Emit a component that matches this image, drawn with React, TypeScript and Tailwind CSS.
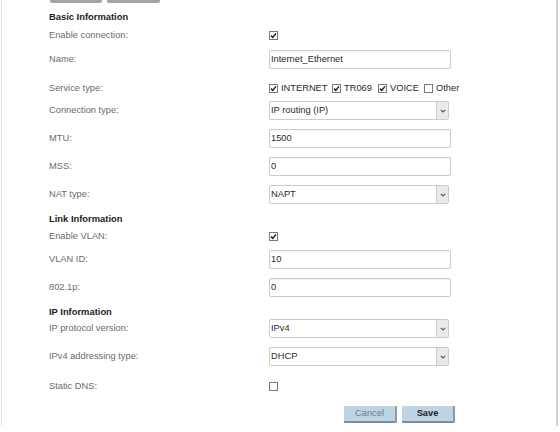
import type { ReactNode } from "react";

const font = { fontFamily: '"Liberation Sans", Arial, sans-serif' };

function Check({ on }: { on: boolean }) {
    return (
        <span className="inline-flex h-[9px] w-[9px] shrink-0 items-center justify-center border border-[#7a7a7a] bg-white">
            {on && (
                <svg width="7" height="7" viewBox="0 0 7 7">
                    <path d="M1 3.6 L2.8 5.4 L6 1.4" fill="none" stroke="#222" strokeWidth="1.5" />
                </svg>
            )}
        </span>
    );
}

function TextBox({ value }: { value: string }) {
    return (
        <div className="flex h-[19px] w-[182px] items-center rounded-[2px] border border-[#cbcbcb] bg-white pl-[1px] text-[9.3px] text-[#2a2a2a] shadow-[inset_0_1px_1px_rgba(0,0,0,0.05)]">
            {value}
        </div>
    );
}

function Dropdown({ value }: { value: string }) {
    return (
        <div className="flex h-[19px] w-[180px] items-stretch rounded-[2px] border border-[#cbcbcb] bg-white text-[9.3px] text-[#2a2a2a]">
            <span className="flex flex-1 items-center pl-[1px]">{value}</span>
            <span className="flex w-[12px] items-center justify-center border-l border-[#cbcbcb] bg-[#e9e9e9]">
                <svg width="6" height="4" viewBox="0 0 6 4">
                    <path d="M0.8 0.8 L3 3 L5.2 0.8" fill="none" stroke="#555" strokeWidth="1.1" />
                </svg>
            </span>
        </div>
    );
}

function Row({ label, mt, children }: { label: string; mt: string; children: ReactNode }) {
    return (
        <div className={`flex h-[19px] items-center ${mt}`}>
            <span className="w-[220px] text-[9.3px] text-[#6b6b6b]">{label}</span>
            {children}
        </div>
    );
}

function Heading({ text, mt }: { text: string; mt: string }) {
    return (
        <div className={`flex h-[12px] items-center text-[9.4px] font-bold text-[#1c1c1c] ${mt}`}>{text}</div>
    );
}

function ServiceOption({ label, on, w }: { label: string; on: boolean; w: string }) {
    return (
        <span className={`flex items-center gap-[3px] ${w}`}>
            <Check on={on} />
            <span className="text-[9.3px] text-[#2a2a2a]">{label}</span>
        </span>
    );
}

export default function App() {
    return (
        <div className="h-[432px] w-[560px] overflow-hidden bg-white" style={font}>
            <div className="ml-[1px] h-[426px] w-[557px] border-l border-r-2 border-l-[#e4e4e4] border-r-[#cdd4de] pl-[47px]">
                {/* top buttons (cut off) */}
                <div className="flex h-[3px] gap-[5px] pl-[1px]">
                    <div className="h-[3px] w-[52px] rounded-b-[2px] bg-[#a4a4a4]" />
                    <div className="h-[3px] w-[53px] rounded-b-[2px] bg-[#a4a4a4]" />
                </div>

                <Heading text="Basic Information" mt="mt-[8px]" />
                <Row label="Enable connection:" mt="mt-[3px]">
                    <Check on />
                </Row>
                <Row label="Name:" mt="mt-[5px]">
                    <TextBox value="Internet_Ethernet" />
                </Row>
                <Row label="Service type:" mt="mt-[10px]">
                    <div className="flex items-center">
                        <ServiceOption label="INTERNET" on w="w-[63px]" />
                        <ServiceOption label="TR069" on w="w-[46px]" />
                        <ServiceOption label="VOICE" on w="w-[46px]" />
                        <ServiceOption label="Other" on={false} w="w-[40px]" />
                    </div>
                </Row>
                <Row label="Connection type:" mt="mt-[3px]">
                    <Dropdown value="IP routing (IP)" />
                </Row>
                <Row label="MTU:" mt="mt-[9px]">
                    <TextBox value="1500" />
                </Row>
                <Row label="MSS:" mt="mt-[9px]">
                    <TextBox value="0" />
                </Row>
                <Row label="NAT type:" mt="mt-[9px]">
                    <Dropdown value="NAPT" />
                </Row>

                <Heading text="Link Information" mt="mt-[9px]" />
                <Row label="Enable VLAN:" mt="mt-[2px]">
                    <Check on />
                </Row>
                <Row label="VLAN ID:" mt="mt-[4px]">
                    <TextBox value="10" />
                </Row>
                <Row label="802.1p:" mt="mt-[9px]">
                    <TextBox value="0" />
                </Row>

                <Heading text="IP Information" mt="mt-[9px]" />
                <Row label="IP protocol version:" mt="mt-[1px]">
                    <Dropdown value="IPv4" />
                </Row>
                <Row label="IPv4 addressing type:" mt="mt-[9px]">
                    <Dropdown value="DHCP" />
                </Row>
                <Row label="Static DNS:" mt="mt-[11px]">
                    <Check on={false} />
                </Row>

                <div className="mt-[10px] flex h-[17px] gap-[5px] pl-[295px]">
                    <button
                        type="button"
                        className="h-[17px] w-[53px] rounded-[1px] border-b-2 border-r-2 border-b-[#7f8c97] border-r-[#8c98a3] bg-[#bdd4e3] text-[9.3px] text-[#6f7f8b]"
                    >
                        Cancel
                    </button>
                    <button
                        type="button"
                        className="h-[17px] w-[53px] rounded-[1px] border-b-2 border-r-2 border-b-[#7f8c97] border-r-[#8c98a3] bg-[#bdd4e3] text-[9.3px] font-bold text-[#222]"
                    >
                        Save
                    </button>
                </div>
            </div>
        </div>
    );
}
